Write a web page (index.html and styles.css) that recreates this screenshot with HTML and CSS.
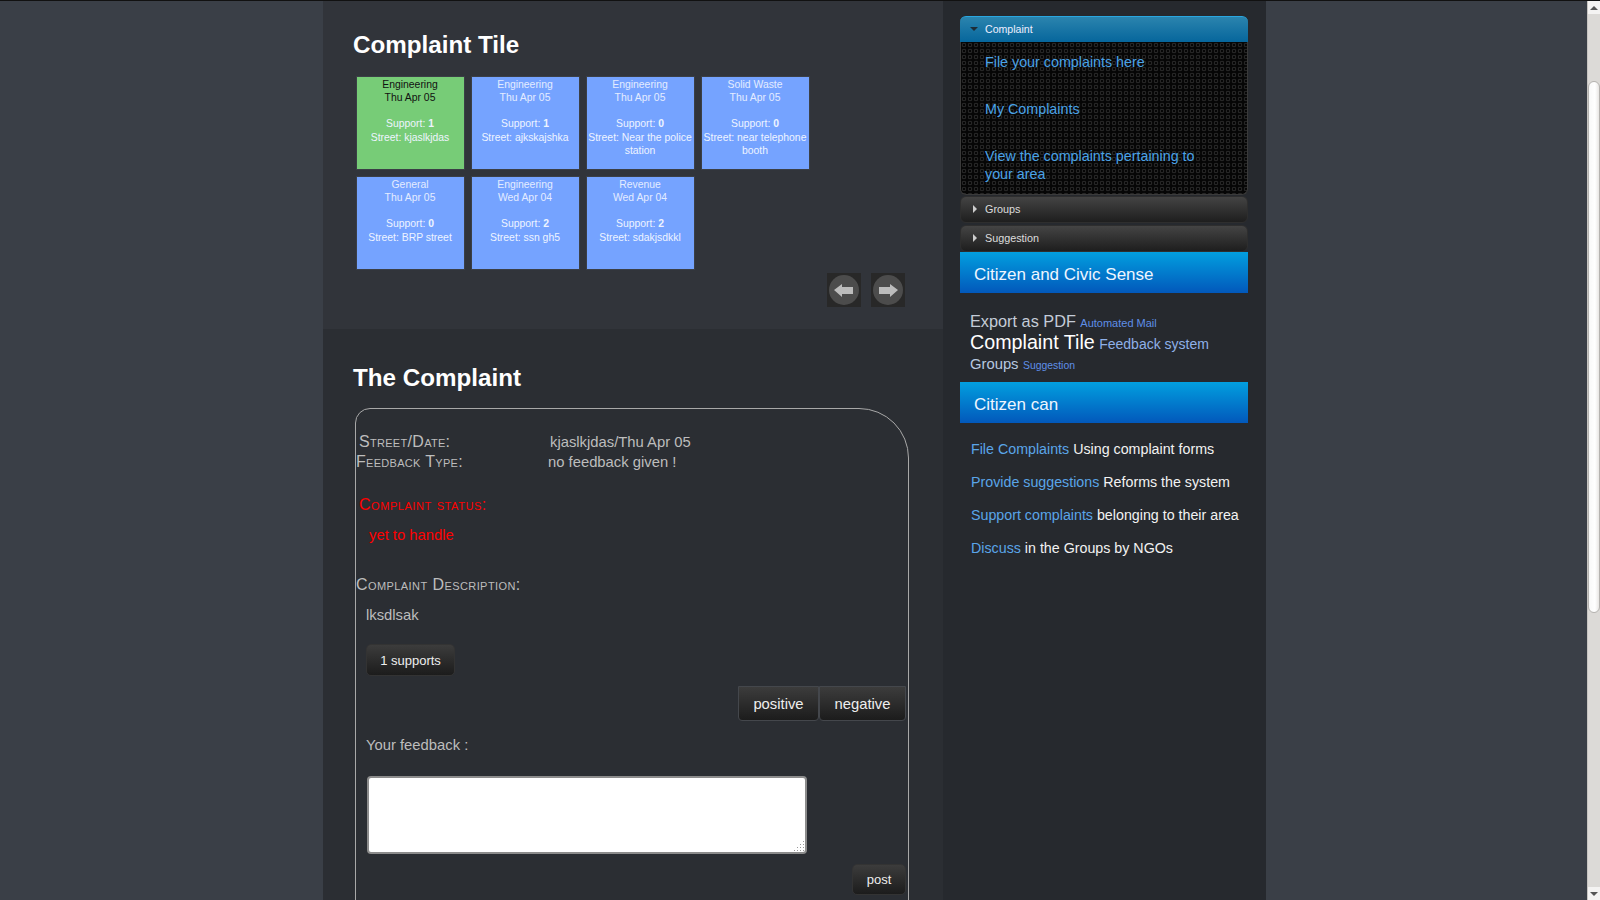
FILE: index.html
```html
<!DOCTYPE html>
<html lang="en">
<head>
  <meta charset="UTF-8">
  <title>Complaint Tile</title>
  <link rel="stylesheet" href="styles.css">
</head>
<body>

  <div class="wrapper">
    <div class="main">

      <section class="tile-section">
        <h2>Complaint Tile</h2>
        <div class="tiles">
          <div class="tile green">Engineering<br>Thu Apr 05<br><br><span class="light">Support: <b>1</b><br>Street: kjaslkjdas</span></div>
          <div class="tile">Engineering<br>Thu Apr 05<br><br><span class="light">Support: <b>1</b><br>Street: ajkskajshka</span></div>
          <div class="tile">Engineering<br>Thu Apr 05<br><br><span class="light">Support: <b>0</b><br>Street: Near the police station</span></div>
          <div class="tile">Solid Waste<br>Thu Apr 05<br><br><span class="light">Support: <b>0</b><br>Street: near telephone booth</span></div>
          <div class="tile">General<br>Thu Apr 05<br><br><span class="light">Support: <b>0</b><br>Street: BRP street</span></div>
          <div class="tile">Engineering<br>Wed Apr 04<br><br><span class="light">Support: <b>2</b><br>Street: ssn gh5</span></div>
          <div class="tile">Revenue<br>Wed Apr 04<br><br><span class="light">Support: <b>2</b><br>Street: sdakjsdkkl</span></div>
        </div>
        <div class="pager">
          <span class="page-btn">
            <svg width="34" height="34" viewBox="0 0 34 34"><circle cx="17" cy="17" r="15" fill="#4c4c4c"/><path d="M7 17l8-6v3h11v7H15v3z" fill="#bcbcbc"/></svg>
          </span>
          <span class="page-btn">
            <svg width="34" height="34" viewBox="0 0 34 34"><circle cx="17" cy="17" r="15" fill="#4c4c4c"/><path d="M27 17l-8-6v3H8v7h11v3z" fill="#bcbcbc"/></svg>
          </span>
        </div>
      </section>

      <section class="complaint-section">
        <h2>The Complaint</h2>
        <div class="complaint-box">
          <div class="row row-street"><span class="label">Street/Date:</span><span>kjaslkjdas/Thu Apr 05</span></div>
          <div class="row row-type"><span class="label">Feedback Type:</span><span>no feedback given !</span></div>
          <div class="status-label">Complaint status:</div>
          <div class="status-value">yet to handle</div>
          <div class="desc-label">Complaint Description:</div>
          <div class="desc-value">lksdlsak</div>
          <button class="btn supports">1 supports</button>
          <div class="vote">
            <button class="btn vote-btn">positive</button>
            <button class="btn vote-btn">negative</button>
          </div>
          <div class="feedback-label">Your feedback :</div>
          <div class="feedback-wrap">
            <textarea class="feedback"></textarea>
            <svg class="grip" width="12" height="12" viewBox="0 0 12 12" fill="#999">
              <rect x="10" y="1" width="1" height="1"/>
              <rect x="10" y="4" width="1" height="1"/><rect x="7" y="4" width="1" height="1"/>
              <rect x="10" y="7" width="1" height="1"/><rect x="7" y="7" width="1" height="1"/><rect x="4" y="7" width="1" height="1"/>
              <rect x="10" y="10" width="1" height="1"/><rect x="7" y="10" width="1" height="1"/><rect x="4" y="10" width="1" height="1"/><rect x="1" y="10" width="1" height="1"/>
            </svg>
          </div>
          <div class="post-row"><button class="btn post">post</button></div>
        </div>
      </section>

    </div>

    <div class="sidebar">
      <div class="acc-head active"><span class="tri-down"></span>Complaint</div>
      <div class="acc-body">
        <a href="#">File your complaints here</a>
        <a href="#">My Complaints</a>
        <a href="#">View the complaints pertaining to your area</a>
      </div>
      <div class="acc-head"><span class="tri-right"></span>Groups</div>
      <div class="acc-head"><span class="tri-right"></span>Suggestion</div>

      <div class="side-title">Citizen and Civic Sense</div>
      <div class="cloud">
        <a class="t16" href="#">Export as PDF</a> <a class="t11" href="#">Automated Mail</a>
        <a class="t20" href="#">Complaint Tile</a> <a class="t14" href="#">Feedback system</a>
        <a class="t15" href="#">Groups</a> <a class="t10" href="#">Suggestion</a>
      </div>

      <div class="side-title">Citizen can</div>
      <ul class="can-list">
        <li><a href="#">File Complaints</a> Using complaint forms</li>
        <li><a href="#">Provide suggestions</a> Reforms the system</li>
        <li><a href="#">Support complaints</a> belonging to their area</li>
        <li><a href="#">Discuss</a> in the Groups by NGOs</li>
      </ul>
    </div>
  </div>

  <div class="scrollbar">
    <div class="arrow-up"></div>
    <div class="thumb"></div>
    <div class="arrow-down"></div>
  </div>

</body>
</html>
```

FILE: styles.css
```css
html, body {
  height: 900px;
  overflow: hidden;
}
body {
  margin: 0;
  padding-right: 11px;
  box-sizing: border-box;
  border-top: 1px solid #111;
  background-color: #3a3f47;
  font-family: "Liberation Sans", Arial, sans-serif;
  color: #c8c8c8;
}
a {
  text-decoration: none;
}
button {
  font-family: inherit;
}

.wrapper {
  display: flex;
  width: 943px;
  margin: 0 auto;
}
.main {
  width: 620px;
  background-color: #2b2e33;
}
.sidebar {
  width: 323px;
  box-sizing: border-box;
  height: 899px;
  padding: 15px 18px 0 17px;
  background-color: #26292e;
}

h2 {
  margin: 0;
  font-size: 24.2px;
  line-height: 28px;
  font-weight: bold;
  color: #fff;
}

/* tiles */
.tile-section {
  height: 328px;
  box-sizing: border-box;
  padding: 30px 0 0 30px;
  background-color: #31343a;
}
.tiles {
  display: flex;
  flex-wrap: wrap;
  gap: 6px;
  width: 470px;
  margin: 17px 0 0 3px;
}
.tile {
  width: 109px;
  height: 94px;
  box-sizing: border-box;
  border: 1px solid #3b3f46;
  padding: 1px 1px 0 0;
  background-color: #75a3ff;
  color: #e4ecff;
  font-size: 10.4px;
  line-height: 13px;
  text-align: center;
}
.tile b {
  display: inline-block;
  padding-bottom: 1px;
}
.tile.green {
  background-color: #77cc77;
  color: #111;
}
.tile .light {
  color: #eef4ff;
}
.pager {
  display: flex;
  justify-content: flex-end;
  gap: 10px;
  width: 552px;
  margin-top: 3px;
}
.page-btn {
  display: block;
  width: 34px;
  height: 34px;
  background-color: #282828;
}

/* complaint */
.complaint-section {
  padding: 35px 0 0 30px;
}
.complaint-box {
  width: 554px;
  height: 700px;
  box-sizing: border-box;
  margin: 16px 0 0 2px;
  border: 1px solid #a8a8a8;
  border-radius: 15px 50px 0 0;
  padding-top: 23px;
  font-size: 14.8px;
  color: #bdbdbd;
}
.row {
  display: flex;
  line-height: 20px;
}
.label {
  width: 192px;
  font-variant: small-caps;
  font-size: 16px;
  letter-spacing: .3px;
}
.row-street .label {
  width: 191px;
}
.row-street {
  padding-left: 3px;
}
.status-label {
  margin: 23px 0 0 3px;
  font-variant: small-caps;
  font-size: 16px;
  letter-spacing: .55px;
  line-height: 20px;
  color: #f00;
}
.status-value {
  margin: 10px 0 0 13px;
  line-height: 20px;
  color: #f00;
}
.desc-label {
  margin: 30px 0 0 0;
  font-variant: small-caps;
  font-size: 16px;
  letter-spacing: .42px;
  line-height: 20px;
}
.desc-value {
  margin: 10px 0 0 10px;
  line-height: 20px;
}

.btn {
  border: 1px solid #333;
  border-radius: 5px;
  background: linear-gradient(#3c3c3c, #1c1c1c);
  color: #eee;
  font-size: 13px;
}
.supports {
  display: block;
  width: 89px;
  height: 32px;
  margin: 19px 0 0 10px;
  padding: 0;
}
.vote {
  display: flex;
  justify-content: flex-end;
  margin: 10px 2px 0 0;
}
.vote-btn {
  height: 35px;
  padding: 0 14.5px;
  border: 1px solid #44474c;
  border-radius: 0 0 4px 4px;
  font-size: 14.8px;
}
.feedback-label {
  margin: 14px 0 0 10px;
  line-height: 20px;
}
.feedback-wrap {
  position: relative;
  width: 440px;
  margin: 21px 0 0 11px;
}
.feedback {
  display: block;
  width: 440px;
  height: 78px;
  box-sizing: border-box;
  border: 2px solid #8c8c8c;
  border-radius: 4px;
  background-color: #fff;
  resize: none;
}
.grip {
  position: absolute;
  right: 2px;
  bottom: 2px;
}
.post-row {
  display: flex;
  justify-content: flex-end;
  margin: 10px 2px 0 0;
}
.post {
  width: 54px;
  height: 31px;
  padding: 0;
}

/* accordion */
.acc-head {
  display: flex;
  align-items: center;
  height: 27px;
  box-sizing: border-box;
  margin-top: 2px;
  border: 1px solid #2e2e2e;
  border-radius: 6px;
  background: linear-gradient(#444, #1e1e1e);
  color: #ddd;
  font-size: 10.8px;
  padding-left: 12px;
  padding-bottom: 2px;
}
.acc-head.active {
  margin-top: 0;
  height: 26px;
  border: 0;
  border-top: 1px solid #2aa7e0;
  border-radius: 6px 6px 0 0;
  background: linear-gradient(#2b84ae, #06669c);
  color: #eef;
  font-size: 10.6px;
  padding-left: 10px;
}
.acc-body + .acc-head {
  margin-top: 1px;
}
.tri-down {
  width: 0;
  height: 0;
  margin-right: 7px;
  border-left: 4px solid transparent;
  border-right: 4px solid transparent;
  border-top: 4px solid #1d2c36;
}
.tri-right {
  width: 0;
  height: 0;
  margin-right: 8px;
  border-top: 4px solid transparent;
  border-bottom: 4px solid transparent;
  border-left: 4px solid #ccc;
}
.acc-body {
  box-sizing: border-box;
  height: 153px;
  padding: 11px 40px 0 24px;
  border: 1px solid #3a3a3a;
  border-top: 0;
  border-radius: 0 0 6px 6px;
  background-color: #060606;
  background-image: radial-gradient(circle at 3px 3px, #060606 0.9px, #262626 1.3px, #262626 2px, #060606 2.6px);
  background-size: 6px 6px;
  font-size: 14.3px;
  line-height: 18px;
}
.acc-body a {
  display: block;
  margin-bottom: 29px;
  color: #4aa3e8;
}

.side-title {
  height: 41px;
  padding-left: 14px;
  background: linear-gradient(#029fdf, #0258bb);
  color: #eef6ff;
  font-size: 17px;
  line-height: 45px;
}

.cloud {
  height: 89px;
  box-sizing: border-box;
  padding: 18px 10px 0 10px;
  line-height: 21px;
}
.cloud a { line-height: 1; }
.cloud .t16 { font-size: 16.3px; color: #c4ccd8; }
.cloud .t20 { font-size: 19.7px; color: #fff; vertical-align: -1px; }
.cloud .t14 { font-size: 14px; color: #8fb0e8; vertical-align: -1px; }
.cloud .t15 { font-size: 14.8px; color: #b8c8e0; }
.cloud .t11 { font-size: 11px; color: #5f8fe8; }
.cloud .t10 { font-size: 10.4px; color: #5f8fe8; }

.can-list {
  list-style: none;
  margin: 0;
  padding: 18px 0 0 11px;
  font-size: 14.25px;
  line-height: 17px;
  color: #f2f2f2;
}
.can-list li {
  margin-bottom: 16px;
}
.can-list a {
  color: #5aa5e8;
}

/* scrollbar drawn over the page edge */
.scrollbar {
  position: fixed;
  top: 1px;
  right: 0;
  width: 13px;
  height: 899px;
  background-color: #dcdad7;
  border-left: 1px solid #c6c4c1;
  box-sizing: border-box;
}
.arrow-up, .arrow-down {
  position: absolute;
  left: 0;
  width: 12px;
  height: 13px;
  background-color: #f4f3f2;
}
.arrow-up { top: 0; }
.arrow-down { bottom: 0; }
.arrow-up::after, .arrow-down::after {
  content: "";
  position: absolute;
  left: 2px;
  top: 5px;
  border-left: 4px solid transparent;
  border-right: 4px solid transparent;
}
.arrow-up::after { border-bottom: 4px solid #555; }
.arrow-down::after { border-top: 4px solid #555; }
.thumb {
  position: absolute;
  top: 80px;
  left: 0;
  width: 12px;
  height: 532px;
  box-sizing: border-box;
  border: 1px solid #b5b3b0;
  border-radius: 6px;
  background: linear-gradient(to right, #f8f8f8, #ffffff 60%, #e8e6e4);
}
```
